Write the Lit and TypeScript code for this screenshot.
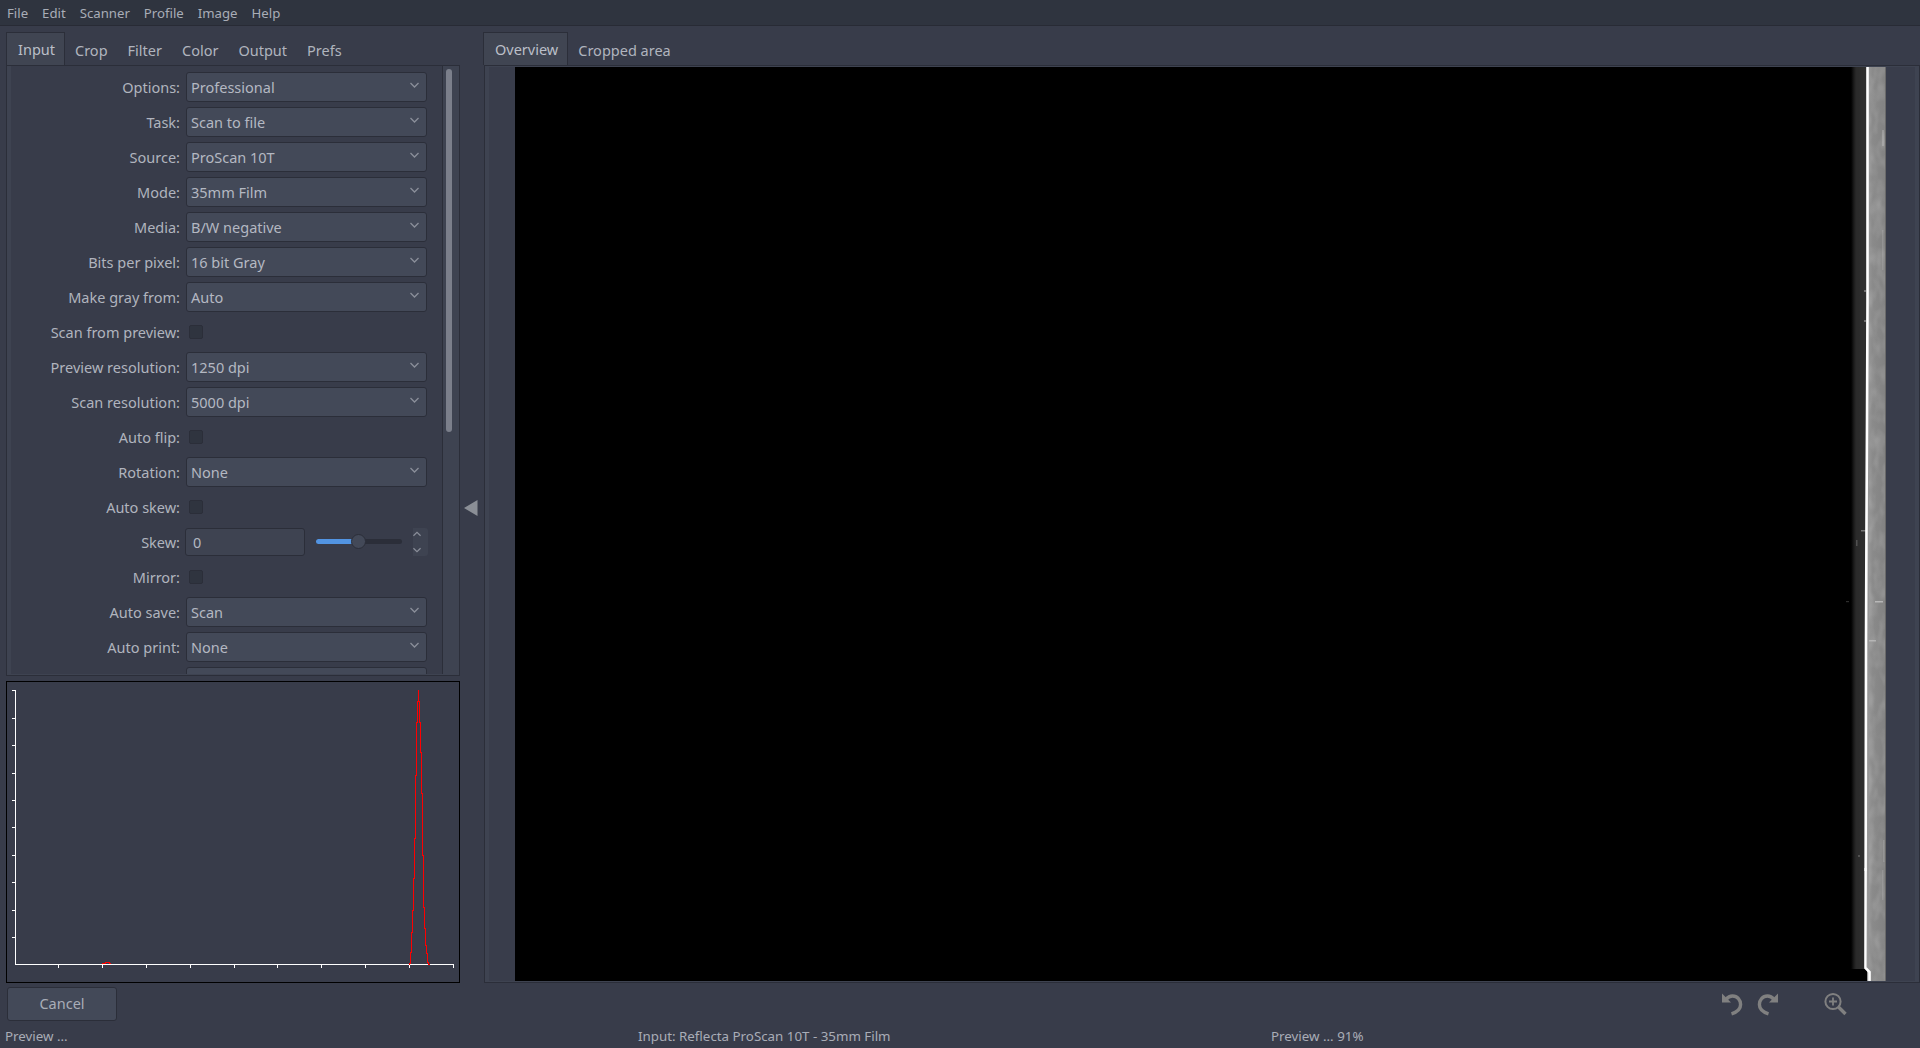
import { LitElement, html, css, svg } from "lit";
import { customElement } from "lit/decorators.js";

type Row = { label: string; kind: "select" | "check" | "skew"; value?: string };

const ROWS: Row[] = [
  { label: "Options:", kind: "select", value: "Professional" },
  { label: "Task:", kind: "select", value: "Scan to file" },
  { label: "Source:", kind: "select", value: "ProScan 10T" },
  { label: "Mode:", kind: "select", value: "35mm Film" },
  { label: "Media:", kind: "select", value: "B/W negative" },
  { label: "Bits per pixel:", kind: "select", value: "16 bit Gray" },
  { label: "Make gray from:", kind: "select", value: "Auto" },
  { label: "Scan from preview:", kind: "check" },
  { label: "Preview resolution:", kind: "select", value: "1250 dpi" },
  { label: "Scan resolution:", kind: "select", value: "5000 dpi" },
  { label: "Auto flip:", kind: "check" },
  { label: "Rotation:", kind: "select", value: "None" },
  { label: "Auto skew:", kind: "check" },
  { label: "Skew:", kind: "skew" },
  { label: "Mirror:", kind: "check" },
  { label: "Auto save:", kind: "select", value: "Scan" },
  { label: "Auto print:", kind: "select", value: "None" },
  { label: "", kind: "select", value: "" },
];

const MENU = ["File", "Edit", "Scanner", "Profile", "Image", "Help"];
const LEFT_TABS = ["Input", "Crop", "Filter", "Color", "Output", "Prefs"];

// Histogram outline, sampled from the reference: [x, y] in page pixels.
const SPIKE: [number, number][] = [
  [408, 964], [409, 963], [410, 952], [411, 932], [412, 910], [413, 878], [414, 838], [415, 775],
  [416, 722], [417, 701], [418, 690], [419, 701], [420, 722], [421, 752], [422, 793], [423, 855],
  [424, 907], [425, 928], [426, 945], [427, 953], [428, 962], [429, 964],
];

function spikePath() {
  let d = `M${SPIKE[0][0] + 0.5} ${SPIKE[0][1]}`;
  for (let i = 1; i < SPIKE.length; i++) {
    const [x, y] = SPIKE[i];
    const [, py] = SPIKE[i - 1];
    d += y < py ? ` H${x + 0.5} V${y}` : ` V${y} H${x + 0.5}`;
  }
  return d;
}

const XT = [58, 102, 146, 190, 234, 277, 321, 365, 409, 453];
const YT = [690, 718, 745, 773, 800, 827, 855, 882, 910, 937];
const SPECKS: [number, number, number, number, number][] = [
  [1861, 530, 5, 1.5, 0.35],
  [1856, 540, 1.5, 6, 0.18],
  [1846, 601, 3, 1.2, 0.18],
  [1875, 601, 8, 1.5, 0.4],
  [1869, 640, 7, 1.5, 0.3],
  [1865, 620, 2, 2, 0.3],
  [1858, 855, 2, 2, 0.18],
  [1864, 868, 3, 3, 0.5],
  [1882, 130, 2, 16, 0.18],
  [1882, 230, 1.5, 40, 0.12],
  [1864, 290, 2, 2, 0.3],
  [1864, 320, 2, 2, 0.3],
  [1883, 840, 1.5, 22, 0.14],
  [1882, 870, 1.5, 30, 0.12],
];

@customElement("app-root")
export class AppRoot extends LitElement {
  static styles = css`
    :host {
      display: flex;
      flex-direction: column;
      width: 1920px;
      height: 1048px;
      overflow: hidden;
      background: #383c4a;
      color: #b0b4be;
      font-family: "Noto Sans", "Open Sans", sans-serif;
      font-size: 14.5px;
      line-height: 18px;
    }
    * { box-sizing: border-box; }
    .menubar {
      flex: none;
      height: 26px;
      background: #2f343f;
      border-bottom: 1px solid #282b35;
      display: flex;
      align-items: center;
      padding: 1px 0 0 0;
      color: #a9adb7;
      font-size: 13.2px;
    }
    .menubar span { padding: 0 7px; }
    .main { flex: none; display: flex; height: 957px; padding-top: 6px; }
    .left { flex: none; width: 454px; margin-left: 6px; display: flex; flex-direction: column; }
    .tabs { flex: none; height: 33px; display: flex; align-items: center; position: relative; z-index: 1; }
    .tab { height: 33px; padding: 2px 10px 0; display: flex; align-items: center; }
    .tab.active {
      background: #404552;
      border: 1px solid #2b2e39;
      border-bottom: none;
      padding: 0 9px 0 11px;
      color: #bbbfc8;
    }
    .pane {
      flex: none;
      height: 611px;
      border: 1px solid #2b2e39;
      background: #3e4351;
      padding: 0 0 1px 4px;
      display: flex;
      overflow: hidden;
    }
    .scroll {
      flex: none;
      width: 431px;
      height: 100%;
      background: #383c4a;
      overflow: hidden;
      padding-top: 6px;
    }
    .row { display: flex; align-items: center; height: 35px; padding-bottom: 5px; }
    .label { flex: none; width: 169px; padding-bottom: 1px; text-align: right; margin-right: 6px; white-space: nowrap; }
    .select {
      flex: none;
      width: 241px;
      height: 30px;
      background: #434958;
      border: 1px solid #2b2e39;
      border-radius: 3px;
      padding: 0 7px 1px 4px;
      display: flex;
      align-items: center;
      justify-content: space-between;
      color: #b4b8c2;
    }
    .select svg { margin-top: -3px; }
    .check {
      width: 14px;
      height: 14px;
      margin-left: 3px;
      background: #2f343f;
      border: 1px solid #2b2e39;
      border-radius: 2px;
    }
    .skew { display: flex; align-items: center; width: 243px; margin-left: -1px; }
    .input {
      flex: none;
      width: 120px;
      height: 28px;
      background: #3e4351;
      border: 1px solid #2b2e39;
      border-radius: 3px;
      padding: 0 7px 1px;
      display: flex;
      align-items: center;
      color: #b4b8c2;
    }
    .slider {
      flex: none;
      position: relative;
      width: 86px;
      height: 5px;
      margin: -2px 0 0 11px;
      border-radius: 3px;
      background: #2b2e39;
    }
    .fill { height: 5px; border-radius: 3px 0 0 3px; background: #5294e2; }
    .thumb {
      position: absolute;
      left: 35px;
      top: -5px;
      width: 15px;
      height: 15px;
      border-radius: 50%;
      background: #434958;
      border: 1px solid #2b2e39;
    }
    .spin {
      flex: none;
      width: 15px;
      height: 28px;
      margin-left: 11px;
      background: #3e4351;
      border-radius: 0 3px 3px 0;
      display: flex;
      flex-direction: column;
      align-items: flex-start;
      justify-content: space-between;
      padding: 3px 0 3px;
    }
    .groove {
      flex: none;
      width: 17px;
      border-left: 1px solid #2b2e39;
      padding: 3px 0 0 3px;
    }
    .bar { width: 6px; height: 363px; border-radius: 3px; background: #7b7f8b; }
    .hist { flex: none; display: block; margin-top: 5px; }
    .splitter { flex: none; width: 24px; display: flex; align-items: center; padding: 0 0 0 4px; }
    .right { flex: none; width: 1436px; display: flex; flex-direction: column; }
    .right .tabs { margin-left: -1px; }
    .rpane {
      flex: none;
      height: 918px;
      border: 1px solid #2b2e39;
      background: #3e4351;
      padding: 1px 4px 0;
      margin-top: 0;
    }
    .stage { height: 914px; background: #393d4b; padding-left: 26px; }
    .image { display: block; }
    .tools { flex: none; height: 41px; display: flex; align-items: center; }
    .cancel {
      flex: none;
      width: 110px;
      height: 34px;
      margin: 0 0 0 7px;
      padding-bottom: 1px;
      background: #434958;
      border: 1px solid #2b2e39;
      border-radius: 3px;
      display: flex;
      align-items: center;
      justify-content: center;
      color: #a9adb7;
    }
    .icons { margin-left: 1604px; display: flex; align-items: center; }
    .icons svg { display: block; }
    .gap-a { width: 14px; }
    .gap-b { width: 44px; }
    .status { flex: none; height: 24px; display: flex; align-items: center; padding-bottom: 1px; color: #a9adb7; font-size: 13.33px; }
    .status span { flex: none; }
    .s1 { width: 638px; padding-left: 5px; }
    .s2 { width: 633px; }
  `;

  private chevron(up = false, color = "#8b8f9a", w = 9) {
    return html`<svg width=${w} height="6" viewBox="0 0 9 6" fill="none" stroke=${color} stroke-width="1.3">
      <path d=${up ? "M.5 5 4.5 1 8.5 5" : "M.5 1 4.5 5 8.5 1"}></path>
    </svg>`;
  }

  private row(r: Row) {
    return html`<div class="row">
      <div class="label">${r.label}</div>
      ${r.kind === "select"
        ? html`<div class="select"><span>${r.value}</span>${this.chevron()}</div>`
        : r.kind === "check"
        ? html`<div class="check"></div>`
        : html`<div class="skew">
            <div class="input">0</div>
            <div class="slider"><div class="fill" style="width:42px"></div><div class="thumb"></div></div>
            <div class="spin">${this.chevron(true, "#8b8f9a", 8)}${this.chevron(false, "#8b8f9a", 8)}</div>
          </div>`}
    </div>`;
  }

  private histogram() {
    return html`<svg class="hist" width="454" height="302" viewBox="6 681 454 302" shape-rendering="crispEdges">
      <rect x="6.5" y="681.5" width="453" height="301" fill="#383c4a" stroke="#000"></rect>
      <g stroke="#fff" fill="none">
        <path d="M15.5 690V964.5H453.5"></path>
        ${YT.map((y) => svg`<path d="M12 ${y + 0.5}H15"></path>`)}
        ${XT.map((x) => svg`<path d="M${x + 0.5} 965V968"></path>`)}
      </g>
      <path d="M102 963.5H105V962.5H109V963.5H111" stroke="#f00" fill="none"></path>
      <path d=${spikePath()} stroke="#f00" fill="none"></path>
    </svg>`;
  }

  private scan() {
    const edge = "1867.5,67 1867.5,300 1867,420 1866.5,520 1866,640 1865.5,968 1869.5,972 1869.5,981";
    return html`<svg class="image" width="1371" height="914" viewBox="515 67 1371 914" preserveAspectRatio="none">
      <defs>
        <linearGradient id="dk" x1="0" x2="1" y1="0" y2="0">
          <stop offset="0" stop-color="#000"></stop>
          <stop offset=".18" stop-color="#1c1c1c"></stop>
          <stop offset=".3" stop-color="#2a2a2a"></stop>
          <stop offset="1" stop-color="#303030"></stop>
        </linearGradient>
        <linearGradient id="gr" x1="0" x2="1" y1="0" y2="0">
          <stop offset="0" stop-color="#9a9a9a"></stop>
          <stop offset=".3" stop-color="#8a8a8a"></stop>
          <stop offset="1" stop-color="#828282"></stop>
        </linearGradient>
        <filter id="soft" x="-50%" width="200%"><feGaussianBlur stdDeviation=".6"></feGaussianBlur></filter>
        <filter id="noise" x="0" y="0" width="100%" height="100%">
          <feTurbulence type="fractalNoise" baseFrequency=".12 .06" numOctaves="2" seed="4"></feTurbulence>
          <feColorMatrix type="matrix" values="0 0 0 0 1  0 0 0 0 1  0 0 0 0 1  1.1 0 0 0 -.42"></feColorMatrix>
        </filter>
      </defs>
      <rect x="515" y="67" width="1371" height="914" fill="#000"></rect>
      <rect x="1851" y="67" width="17" height="902" fill="url(#dk)"></rect>
      <rect x="1867" y="67" width="19" height="914" fill="url(#gr)"></rect>
      <rect x="1869" y="67" width="17" height="914" filter="url(#noise)" opacity=".28"></rect>
      <rect x="1885" y="67" width="1" height="914" fill="#6a6a6a"></rect>
      <g filter="url(#soft)">
        <polyline points=${edge} fill="none" stroke="#fff" stroke-width="2.6"></polyline>
        ${SPECKS.map(([x, y, w, h, o]) => svg`<rect x=${x} y=${y} width=${w} height=${h} fill="#fff" opacity=${o}></rect>`)}
      </g>
    </svg>`;
  }

  private icons() {
    const arrow = (flip: boolean) => html`<svg width="22" height="24" viewBox="0 0 22 24"
        style=${flip ? "transform:scaleX(-1)" : ""} fill="none" stroke="#808080" stroke-width="3.4">
      <path d="M5 7.5C7 5 9 4 11.5 4 16.5 4 19.6 8 19.6 12.5 19.6 17 16.5 20 10.5 21.8"></path>
      <path d="M1 1.5V10.5H10Z" fill="#808080" stroke="none"></path>
    </svg>`;
    return html`<div class="icons">
      ${arrow(false)}
      <div class="gap-a"></div>
      ${arrow(true)}
      <div class="gap-b"></div>
      <svg width="24" height="24" viewBox="0 0 24 24" fill="none" stroke="#808080">
        <circle cx="10" cy="9.5" r="7.6" stroke-width="2"></circle>
        <path d="M10 5.5V13.5M6 9.5H14" stroke-width="1.8"></path>
        <path d="M15.5 15 22.5 22" stroke-width="3.4"></path>
      </svg>
    </div>`;
  }

  render() {
    return html`
      <div class="menubar">${MENU.map((m) => html`<span>${m}</span>`)}</div>
      <div class="main">
        <div class="left">
          <div class="tabs">
            ${LEFT_TABS.map((t, i) => html`<div class="tab ${i === 0 ? "active" : ""}">${t}</div>`)}
          </div>
          <div class="pane">
            <div class="scroll">${ROWS.map((r) => this.row(r))}</div>
            <div class="groove"><div class="bar"></div></div>
          </div>
          ${this.histogram()}
        </div>
        <div class="splitter">
          <svg width="14" height="18" viewBox="0 0 14 18"><path d="M0 9 13.5 1V17Z" fill="#8b8f96"></path></svg>
        </div>
        <div class="right">
          <div class="tabs">
            <div class="tab active">Overview</div>
            <div class="tab">Cropped area</div>
          </div>
          <div class="rpane"><div class="stage">${this.scan()}</div></div>
        </div>
      </div>
      <div class="tools">
        <div class="cancel">Cancel</div>
        ${this.icons()}
      </div>
      <div class="status">
        <span class="s1">Preview ...</span>
        <span class="s2">Input: Reflecta ProScan 10T - 35mm Film</span>
        <span>Preview ... 91%</span>
      </div>
    `;
  }
}
